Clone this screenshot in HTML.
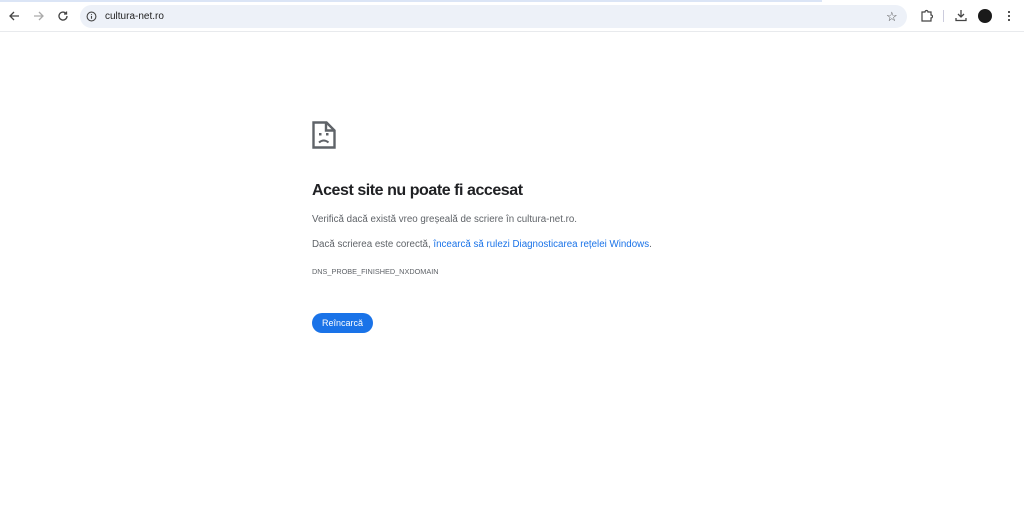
<!DOCTYPE html>
<html><head><style>
body{margin:0;width:1024px;height:512px;background:#fff;font-family:"Liberation Sans",sans-serif;position:relative;overflow:hidden}
.top{position:absolute;left:0;top:0;width:1024px;height:31px;background:#fff;border-bottom:1px solid #e8eaed}
.topline{position:absolute;left:0;top:0;width:822px;height:2px;background:#dbe5f6}
.omni{position:absolute;left:80px;top:5px;width:827px;height:23px;border-radius:12px;background:#edf1f8}
.url{position:absolute;left:105px;top:11px;font-size:10px;color:#1f1f1f}
.c{position:absolute;left:312px;color:#5f6368;white-space:nowrap}
h1{position:absolute;left:312px;top:182px;margin:0;font-size:16px;font-weight:bold;color:#202124;letter-spacing:-0.45px}
.p{font-size:9.75px}
a{color:#1a73e8;text-decoration:none}
.btn{position:absolute;left:312px;top:313px;width:61px;height:20px;border-radius:10px;background:#1a73e8;color:#fff;font-size:9px;text-align:center;line-height:20px}
</style></head><body>
<div class="top"><div class="topline"></div>
<svg style="position:absolute;left:8px;top:10px" width="12" height="12" viewBox="0 0 12 12"><path d="M11 6H2M6 2L2 6l4 4" stroke="#444" stroke-width="1.3" fill="none"/></svg>
<svg style="position:absolute;left:33px;top:10px" width="12" height="12" viewBox="0 0 12 12"><path d="M1 6h9M6 2l4 4-4 4" stroke="#aaa" stroke-width="1.3" fill="none"/></svg>
<svg style="position:absolute;left:57px;top:10px" width="12" height="12" viewBox="0 0 12 12"><path d="M10 6a4 4 0 1 1-1.2-2.8M9.5 1.5v2.5H7" stroke="#444" stroke-width="1.3" fill="none"/></svg>
<div class="omni"></div>
<svg style="position:absolute;left:86px;top:11px" width="11" height="11" viewBox="0 0 12 12"><circle cx="6" cy="6" r="4.8" stroke="#444" stroke-width="1.2" fill="none"/><path d="M6 5.3v3.2M6 3.4v.9" stroke="#444" stroke-width="1.2"/></svg>
<div class="url">cultura-net.ro</div>
<div style="position:absolute;left:886px;top:9px;font-size:13px;color:#444">☆</div>
<svg style="position:absolute;left:920px;top:9px" width="13" height="13" viewBox="0 0 13 13"><path d="M2 3h3a1.5 1.5 0 0 1 3 0h3v3a1.5 1.5 0 0 1 0 3v3H2z" stroke="#444" stroke-width="1.2" fill="none"/></svg>
<div style="position:absolute;left:943px;top:10px;width:1px;height:12px;background:#ccd"></div>
<svg style="position:absolute;left:955px;top:9px" width="12" height="13" viewBox="0 0 12 13"><path d="M6 1v7M3 5l3 3 3-3M1 9v2.5h10V9" stroke="#444" stroke-width="1.3" fill="none"/></svg>
<div style="position:absolute;left:978px;top:9px;width:14px;height:14px;border-radius:50%;background:#1a1a1a"></div>
<div style="position:absolute;left:1008px;top:10px;width:2px;height:12px;background:radial-gradient(circle,#444 1px,transparent 1.2px) 0 0/2px 4px"></div>
</div>
<svg style="position:absolute;left:312px;top:121px" width="24" height="28" viewBox="0 0 24 28"><path d="M1.5 1.5h13l8 8v17h-21z" stroke="#5f6368" stroke-width="2.4" fill="none"/><path d="M14 1.5v8h8.5" stroke="#5f6368" stroke-width="2.4" fill="none"/><rect x="7" y="12" width="2.5" height="2.5" fill="#5f6368"/><rect x="14" y="12" width="2.5" height="2.5" fill="#5f6368"/><path d="M7 21.5q4.7-4 9.5 0" stroke="#5f6368" stroke-width="2" fill="none"/></svg>
<h1>Acest site nu poate fi accesat</h1>
<div class="c p" style="top:214px">Verifică dacă există vreo greșeală de scriere în cultura-net.ro.</div>
<div class="c p" style="top:239px">Dacă scrierea este corectă, <a>încearcă să rulezi Diagnosticarea rețelei Windows</a>.</div>
<div class="c" style="top:267px;font-size:7.3px">DNS_PROBE_FINISHED_NXDOMAIN</div>
<div class="btn">Reîncarcă</div>
</body></html>
